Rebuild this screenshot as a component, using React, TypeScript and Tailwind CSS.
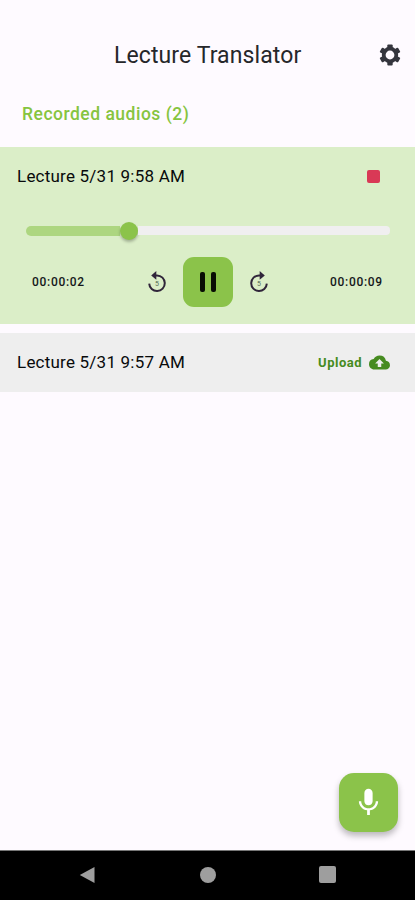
import React from "react";
import { MdCloudUpload, MdMic } from "react-icons/md";

function Gear() {
  return (
    <svg viewBox="-12 -12 24 24" className="h-6 w-6" aria-label="Settings">
      <circle r="6.3" fill="none" stroke="#34353d" strokeWidth="3.8" />
      {[0, 60, 120, 180, 240, 300].map((a) => (
        <rect key={a} x="-2.7" y="-10.6" width="5.4" height="4.6" rx="1" fill="#34353d" transform={`rotate(${a})`} />
      ))}
    </svg>
  );
}

function Skip({ forward = false }: { forward?: boolean }) {
  return (
    <svg viewBox="0 0 22 24" className="h-6 w-[22px]" aria-label={forward ? "Forward 5 seconds" : "Back 5 seconds"}>
      <g transform={forward ? "translate(22 0) scale(-1 1)" : undefined}>
        <path d="M9.5 5.4H11a7.8 7.8 0 1 1-7.8 8.2" fill="none" stroke="#30253a" strokeWidth="2" />
        <path d="M5.2 5.4 10.3 1v8.8z" fill="#30253a" />
      </g>
      <text x="11" y="15.8" textAnchor="middle" className="fill-[#566b55] font-[Roboto] text-[7px]">5</text>
    </svg>
  );
}

export default function App() {
  return (
    <div className="flex h-[900px] w-[415px] flex-col overflow-hidden bg-[#fefaff] font-[Roboto,sans-serif] text-[#15181a]">
      <header className="flex h-[82px] items-end pr-[13px] pl-[114px]">
        <h1 className="mb-[10px] flex-1 text-[23px] leading-8 tracking-[0.1px] whitespace-nowrap text-[#26272a]">Lecture Translator</h1>
        <div className="mb-[15px]"><Gear /></div>
      </header>
      <h2 className="h-[65px] pt-5 pl-[22px] text-[17.5px] leading-6 font-medium tracking-[0.5px] text-[#86c440]">Recorded audios (2)</h2>

      <section className="flex h-[177px] flex-col bg-[#dbeec8]">
        <div className="flex h-[58px] items-center justify-between pr-[35px] pl-[17px]">
          <span className="pt-[2px] text-[17px] tracking-[0.22px] text-[#080a0b]">Lecture 5/31 9:58 AM</span>
          <span className="h-[13px] w-[13px] rounded-[2px] bg-[#d93956]" />
        </div>
        <div className="mt-4 flex h-[19px] items-center pr-[25px] pl-[26px]">
          <div className="h-[10px] w-[94px] rounded-l-full bg-[#add680]" />
          <div className="h-[18px] w-[18px] shrink-0 rounded-full bg-[#8bc34a] shadow-[0_2px_3px_#0004]" />
          <div className="h-[9px] flex-1 rounded-r-[4px] bg-[#f0eff0]" />
        </div>
        <div className="mt-4 flex h-[52px] items-center pl-8">
          <span className="w-[114px] text-[12px] font-medium tracking-[0.7px]">00:00:02</span>
          <Skip />
          <div className="ml-[15px] flex h-[50px] w-[50px] items-center justify-center gap-[6px] rounded-[11px] bg-[#8bc34a]">
            <span className="h-5 w-[5px] rounded-[2px] bg-[#080d04]" />
            <span className="h-5 w-[5px] rounded-[2px] bg-[#080d04]" />
          </div>
          <div className="ml-[15px] flex"><Skip forward /></div>
          <span className="ml-[60px] text-[12px] font-medium tracking-[0.7px]">00:00:09</span>
        </div>
      </section>

      <section className="mt-[9px] flex h-[59px] items-center justify-between bg-[#eeeeee] pr-[25px] pl-[17px]">
        <span className="text-[17px] tracking-[0.22px] text-[#080a0b]">Lecture 5/31 9:57 AM</span>
        <div className="flex items-center gap-[7px] text-[#468b20]">
          <span className="text-[13px] font-bold tracking-[0.5px]">Upload</span>
          <MdCloudUpload className="h-[21px] w-[21px]" />
        </div>
      </section>

      <div className="flex flex-1 items-end justify-end pr-[17px] pb-[18px]">
        <div className="flex h-[59px] w-[59px] items-center justify-center rounded-[15px] bg-[#8bc34a] shadow-[0_4px_6px_#0004]">
          <MdMic className="h-[33px] w-[33px] text-white" />
        </div>
      </div>
      <nav className="flex h-[50px] items-center border-t border-[#777] bg-black pb-[2px] pl-[79px]">
        <svg viewBox="0 0 16 18" className="h-[18px] w-4"><path d="M15.5 1v16L.8 9z" fill="#9e9e9e" /></svg>
        <span className="ml-[105px] h-4 w-4 rounded-full bg-[#9e9e9e]" />
        <span className="ml-[103px] h-[17px] w-[17px] rounded-[2px] bg-[#9e9e9e]" />
      </nav>
    </div>
  );
}
